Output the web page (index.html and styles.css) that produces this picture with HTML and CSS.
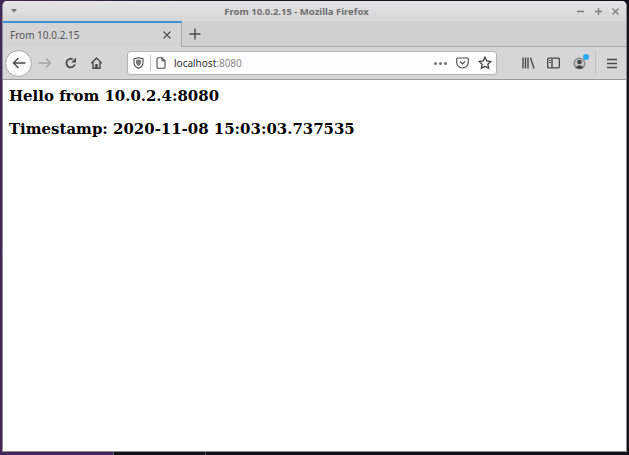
FILE: index.html
```html
<!DOCTYPE html>
<html lang="en">
  <head>
    <meta charset="UTF-8" />
    <meta name="viewport" content="width=device-width, initial-scale=1.0" />
    <title>From 10.0.2.15</title>
    <link rel="stylesheet" href="styles.css">
  </head>

  <body>
    <div class="window">
      <div class="titlebar">
        <svg class="menu-arrow" width="6" height="4" viewBox="0 0 6 4"><path d="M0 0h6L3 3.500z" fill="#707070"/></svg>
        <div class="title">From 10.0.2.15 - Mozilla Firefox</div>
        <div class="win-buttons">
          <svg width="9" height="9" viewBox="0 0 9 9"><path d="M1 4.500h7" class="win-icon"/></svg>
          <svg width="9" height="9" viewBox="0 0 9 9"><path d="M1 4.500h7M4.500 1v7" class="win-icon"/></svg>
          <svg width="9" height="9" viewBox="0 0 9 9"><path d="M1.500 1.500l6 6M7.500 1.500l-6 6" class="win-icon"/></svg>
        </div>
      </div>

      <div class="tabbar">
        <div class="tab">
          <span class="tab-label">From 10.0.2.15</span>
          <svg width="10" height="10" viewBox="0 0 10 10"><path d="M1.500 1.500l7 7M8.500 1.500l-7 7" class="tool-icon thin"/></svg>
        </div>
        <button class="new-tab">
          <svg width="12" height="12" viewBox="0 0 12 12"><path d="M6 .5v11M.5 6h11" class="tool-icon"/></svg>
        </button>
      </div>

      <div class="navbar">
        <button class="back-btn">
          <svg width="14" height="12" viewBox="0 0 14 12"><path d="M13.500 6H1.500M6.500 1l-5 5 5 5" class="tool-icon"/></svg>
        </button>
        <svg class="forward" width="14" height="12" viewBox="0 0 14 12"><path d="M.5 6h12M8 1.500L12.500 6 8 10.500" class="tool-icon faded"/></svg>
        <svg class="reload" width="14" height="14" viewBox="0 0 14 14"><path d="M10.800 8.500A4.300 4.300 0 1 1 8.800 3.300" class="tool-icon bold"/><path d="M12 1.500v5H7.200z" fill="#4a4a4a"/></svg>
        <svg class="home" width="14" height="14" viewBox="0 0 14 14"><path d="M1.300 7.200L6.500 2l5.200 5.200M3 6v6.300h7V6" class="tool-icon"/><rect x="5.200" y="8" width="2.600" height="4.300" fill="#4a4a4a"/></svg>

        <div class="urlbar">
          <svg class="shield" width="11" height="12" viewBox="0 0 11 12"><path d="M1 1.800L5.500.8l4.500 1v4C10 8.500 7.500 10.500 5.500 11.200 3.500 10.500 1 8.500 1 5.800z" class="tool-icon thin"/><path d="M3 3l2.500-.5 2.500.5v2.800c0 1.300-1.300 2.600-2.500 3.200C4.300 8.400 3 7.100 3 5.800z" fill="#777"/></svg>
          <span class="url-sep"></span>
          <svg class="page" width="10" height="12" viewBox="0 0 10 12"><path d="M1 1.700Q1 .7 2 .7h4l3 3v6.600q0 1-1 1H2q-1 0-1-1zM6 .7v3h3" class="tool-icon thin"/></svg>
          <span class="url"><span class="host">localhost</span><span class="port">:8080</span></span>
          <span class="dots"><i></i><i></i><i></i></span>
          <svg class="pocket" width="13" height="12" viewBox="0 0 13 12"><path d="M1.700 1h9.600q1 0 1 1v3.500a5.800 5.500 0 0 1-11.600 0V2q0-1 1-1z" class="tool-icon thin"/><path d="M4 4.500L6.500 7 9 4.500" class="tool-icon thin"/></svg>
          <svg class="star" width="14" height="14" viewBox="0 0 14 14"><path d="M7 1.200l1.800 3.700 4 .6-2.900 2.800.7 4L7 10.400l-3.600 1.900.7-4L1.200 5.500l4-.6z" class="tool-icon"/></svg>
        </div>

        <div class="tools">
          <svg class="library" width="13" height="12" viewBox="0 0 13 12"><path d="M1 .5v11M3.500 .5v11M6 .5v11M8.500 .8l3.500 10.700" class="tool-icon"/></svg>
          <svg class="sidebar" width="13" height="12" viewBox="0 0 13 12"><rect x=".6" y="1.100" width="11.800" height="9.800" rx="1.500" class="tool-icon"/><path d="M5 1.200v9.600" class="tool-icon"/><path d="M2 3.500h1.800M2 5.500h1.800" class="tool-icon thin"/></svg>
          <div class="account">
            <svg width="13" height="13" viewBox="0 0 13 13"><circle cx="6.500" cy="6.500" r="6" fill="#8c8c8c"/><circle cx="6.500" cy="6.500" r="4.500" fill="#c8c8c8"/><circle cx="6.500" cy="5" r="2.300" fill="#444"/><path d="M2.500 10.500q4-4.500 8 0q-4 2.500-8 0z" fill="#444"/></svg>
            <span class="badge"></span>
          </div>
          <span class="tool-sep"></span>
          <svg width="12" height="11" viewBox="0 0 12 11"><path d="M1 1.500h10M1 5.500h10M1 9.500h10" class="tool-icon"/></svg>
        </div>
      </div>

      <div class="content">
        <h3>Hello from 10.0.2.4:8080</h3>
        <h3>Timestamp: 2020-11-08 15:03:03.737535</h3>
      </div>
    </div>

    <div class="taskbar">
      <span class="task active"></span>
      <span class="task"></span>
    </div>
  </body>
</html>
```

FILE: styles.css
```css
* {
  box-sizing: border-box;
}

html,
body {
  height: 100%;
}

body {
  display: flex;
  flex-direction: column;
  margin: 0;
  padding: 1px 2px 0 0;
  background: linear-gradient(90deg, #44265a 0, #2f2440 15%, #141722 28%, #10131c 100%);
  font-family: "Noto Sans", sans-serif;
  overflow: hidden;
}

.window {
  display: flex;
  flex-direction: column;
  flex: 1;
  margin-left: 2px;
  background: #fff;
  border: 1px solid #8e8e8e;
  border-top: 0;
  border-radius: 5px 5px 0 0;
  overflow: hidden;
}

.titlebar {
  display: flex;
  align-items: center;
  justify-content: space-between;
  height: 20px;
  padding: 0 6px 0 8px;
  background: linear-gradient(#e4e4e4, #d6d6d6);
  position: relative;
}

.title {
  position: absolute;
  left: 0;
  right: 36px;
  text-align: center;
  font-size: 9.500px;
  font-weight: 700;
  color: #6e6e6e;
}

.win-buttons {
  display: flex;
  gap: 8.500px;
}

.win-icon {
  fill: none;
  stroke: #7c7c7c;
  stroke-width: 1.300;
}

.tabbar {
  display: flex;
  height: 26px;
  background: #d0d0d0;
  border-bottom: 1px solid #a9a9a9;
}

.tab {
  display: flex;
  align-items: center;
  justify-content: space-between;
  width: 179px;
  height: 26px;
  padding: 0 9px 0 7px;
  background: #d4d4d4;
  border-top: 2px solid #3d8fd8;
  border-right: 1px solid #a9a9a9;
  font-size: 10px;
  color: #555;
}

.new-tab {
  display: flex;
  align-items: center;
  padding: 0 0 0 7px;
  background: none;
  border: 0;
}

.tool-icon {
  fill: none;
  stroke: #4a4a4a;
  stroke-width: 1.400;
}

.tool-icon.thin {
  stroke-width: 1.100;
}

.tool-icon.bold {
  stroke-width: 1.800;
}

.tool-icon.faded {
  stroke: #a6a6a6;
}

.navbar {
  display: flex;
  align-items: center;
  height: 33px;
  padding: 0 8px 0 2px;
  background: #d6d6d6;
  border-bottom: 1px solid #9a9a9a;
}

.back-btn {
  display: flex;
  align-items: center;
  justify-content: center;
  width: 27px;
  height: 27px;
  padding: 0;
  background: #fbfbfb;
  border: 1px solid #a5a5a5;
  border-radius: 50%;
}

.forward {
  margin-left: 6px;
}

.reload {
  margin-left: 12px;
}

.home {
  margin-left: 12px;
}

.urlbar {
  display: flex;
  align-items: center;
  width: 370px;
  height: 24px;
  margin-left: 23px;
  padding: 0 4px 0 5px;
  background: #fdfdfd;
  border: 1px solid #b4b4b4;
  border-radius: 3px;
  font-size: 10px;
}

.url-sep {
  width: 1px;
  height: 16px;
  margin: 0 5px 0 6px;
  background: #c4c4c4;
}

.url {
  flex: 1;
  margin-left: 8px;
}

.host {
  color: #333;
}

.port {
  color: #8a8a8a;
}

.dots {
  display: flex;
  gap: 2.200px;
}

.dots i {
  width: 3px;
  height: 3px;
  background: #777;
  border-radius: 50%;
}

.pocket {
  margin-left: 9px;
}

.star {
  margin-left: 9px;
}

.tools {
  display: flex;
  align-items: center;
  margin-left: auto;
}

.library {
  margin-right: 12px;
}

.sidebar {
  margin-right: 13px;
}

.account {
  display: flex;
  position: relative;
}

.badge {
  position: absolute;
  top: -3px;
  right: -3px;
  width: 6px;
  height: 6px;
  background: #2aa8f2;
  border-radius: 50%;
}

.tool-sep {
  width: 1px;
  height: 24px;
  margin: 0 10px 0 9px;
  background: #c2c2c2;
}

.content {
  flex: 1;
  padding: 7px 6px;
  background: #fff;
  font-family: "DejaVu Serif", serif;
  color: #000;
}

h3 {
  margin: 0 0 15px;
  font-size: 14.950px;
  line-height: 18px;
  font-weight: 700;
}

.taskbar {
  display: flex;
  flex: none;
  height: 3px;
  margin-right: -2px;
  background: #10131c;
}

.task {
  width: 92px;
  border-right: 1px solid #555a66;
}

.task.active {
  width: 114px;
  background: #44265a;
}
```
